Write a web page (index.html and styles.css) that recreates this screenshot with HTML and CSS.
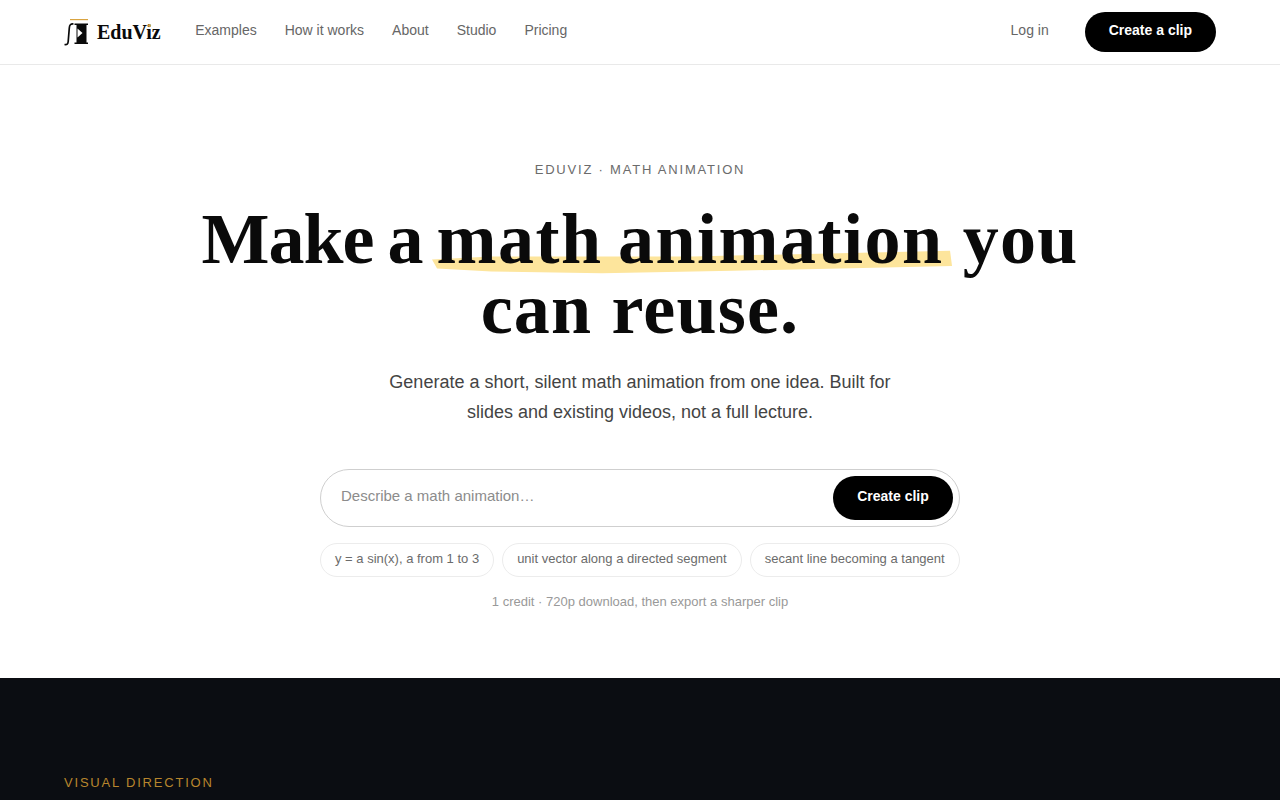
FILE: index.html
```html
<!DOCTYPE html>
<html lang="en">
  <head>
    <meta charset="UTF-8" />
    <meta name="viewport" content="width=device-width, initial-scale=1.0" />
    <title>EduViz</title>
    <link rel="stylesheet" href="styles.css">
  </head>
  <body>
    <header class="topbar">
      <a class="logo" href="#">
        <svg class="logo-mark" viewBox="0 0 24 28" width="24" height="28">
          <rect x="6" y="1" width="18" height="1.200" fill="#d9a441" />
          <path d="M0.500 26.500c2.500 0.500 3.500-0.500 3.700-3L5.300 10C5.500 7 6.500 5.700 9.500 6" fill="none" stroke="#0a0a0a" stroke-width="1.700" />
          <path d="M10.500 5.500H24V7h-1.500v17.500H24V26H10.500v-1.500h2V7h-2z" fill="#0a0a0a" />
          <path d="M13.500 10.500l5 4.500-5 4.500z" fill="#fff" />
        </svg>
        <span class="logo-text">EduV<span class="logo-i">i</span>z</span>
      </a>
      <nav class="nav">
        <a href="#">Examples</a>
        <a href="#">How it works</a>
        <a href="#">About</a>
        <a href="#">Studio</a>
        <a href="#">Pricing</a>
      </nav>
      <div class="actions">
        <a class="login" href="#">Log in</a>
        <a class="cta" href="#">Create a clip</a>
      </div>
    </header>

    <main class="hero">
      <div class="eyebrow">EDUVIZ · MATH ANIMATION</div>
      <h1><span class="lead-in">Make a </span><span class="mark"><svg class="swash" viewBox="0 0 518 30" preserveAspectRatio="none"><path d="M1 12L60 8 260 8 516 1 518 20 300 26 170 29 60 27 6 23z" fill="#fde59c" /></svg>math animation</span> you can reuse.</h1>
      <p class="lead">Generate a short, silent math animation from one idea. Built for slides and existing videos, not a full lecture.</p>
      <form class="prompt" action="#">
        <input type="text" placeholder="Describe a math animation…" />
        <button type="submit">Create clip</button>
      </form>
      <div class="chips">
        <a href="#">y = a sin(x), a from 1 to 3</a>
        <a href="#">unit vector along a directed segment</a>
        <a href="#">secant line becoming a tangent</a>
      </div>
      <div class="note">1 credit · 720p download, then export a sharper clip</div>
    </main>

    <section class="dark">
      <div class="dark-label">VISUAL DIRECTION</div>
    </section>
  </body>
</html>
```

FILE: styles.css
```css
* {
  box-sizing: border-box;
}
body {
  margin: 0;
  background: #fff;
  color: #0a0a0a;
  font-family: "Liberation Sans", Arial, sans-serif;
}
a {
  color: inherit;
  text-decoration: none;
}
.topbar {
  display: flex;
  align-items: center;
  height: 65px;
  padding: 0 64px;
  border-bottom: 1px solid #e9e9e9;
}
.logo {
  display: flex;
  align-items: center;
  gap: 9px;
}
.logo-text {
  font: bold 20px "Liberation Serif", serif;
}
.logo-i {
  position: relative;
}
/* gold dot sits over the i */
.logo-i::after {
  content: "";
  position: absolute;
  top: 3px;
  left: 1.500px;
  width: 3px;
  height: 3px;
  border-radius: 50%;
  background: #d9a441;
}
.nav {
  display: flex;
  gap: 28px;
  margin-left: 34.500px;
  margin-bottom: 5px;
  font-size: 14px;
  color: #666;
}
.actions {
  display: flex;
  align-items: center;
  gap: 36px;
  margin-left: auto;
}
.login {
  margin-bottom: 5px;
  font-size: 14px;
  color: #666;
}
.cta {
  display: flex;
  align-items: center;
  height: 40px;
  padding: 0 24px 4px;
  border-radius: 20px;
  background: #000;
  color: #fff;
  font-size: 14px;
  font-weight: bold;
}
.hero {
  display: flex;
  flex-direction: column;
  align-items: center;
  height: 613px;
  padding-top: 97px;
  text-align: center;
}
.eyebrow {
  font-size: 13px;
  line-height: 16px;
  letter-spacing: 1.800px;
  color: #6b6b6b;
}
h1 {
  width: 900px;
  margin: 26px 0 0;
  font: bold 72px/70px "Liberation Serif", serif;
  letter-spacing: 1.200px;
  color: #0a0a0a;
}
.lead-in {
  letter-spacing: -1px;
  word-spacing: -3px;
}
.mark {
  position: relative;
  z-index: 0;
  letter-spacing: 1.500px;
  word-spacing: -4px;
}
.swash {
  position: absolute;
  left: -6px;
  bottom: 5px;
  width: calc(100% + 14px);
  height: 24px;
  z-index: -1;
}
.lead {
  width: 520px;
  margin: 23px 0 0;
  font-size: 18px;
  line-height: 30px;
  color: #444;
}
.prompt {
  display: flex;
  align-items: center;
  width: 640px;
  height: 58px;
  margin-top: 42px;
  padding: 0 6px 0 18px;
  border: 1px solid #cfcfcf;
  border-radius: 29px;
}
.prompt input {
  flex: 1;
  margin-bottom: 6px;
  border: 0;
  outline: 0;
  font: 15px "Liberation Sans", Arial, sans-serif;
}
.prompt input::placeholder {
  color: #8c8c8c;
}
.prompt button {
  width: 120px;
  height: 44px;
  padding: 0 0 5px;
  border: 0;
  border-radius: 22px;
  background: #000;
  color: #fff;
  font: bold 14px "Liberation Sans", Arial, sans-serif;
}
.chips {
  display: flex;
  gap: 8px;
  width: 640px;
  margin-top: 16px;
}
.chips a {
  height: 34px;
  padding: 0 14px;
  border: 1px solid #ececec;
  border-radius: 17px;
  font-size: 13px;
  line-height: 30px;
  white-space: nowrap;
  color: #6b6b6b;
}
.note {
  margin-top: 17px;
  font-size: 13px;
  line-height: 16px;
  color: #999;
}
.dark {
  height: 122px;
  padding: 97px 64px 0;
  background: #0b0d12;
}
.dark-label {
  font-size: 13px;
  line-height: 16px;
  letter-spacing: 1.800px;
  color: #b8862d;
}
```
